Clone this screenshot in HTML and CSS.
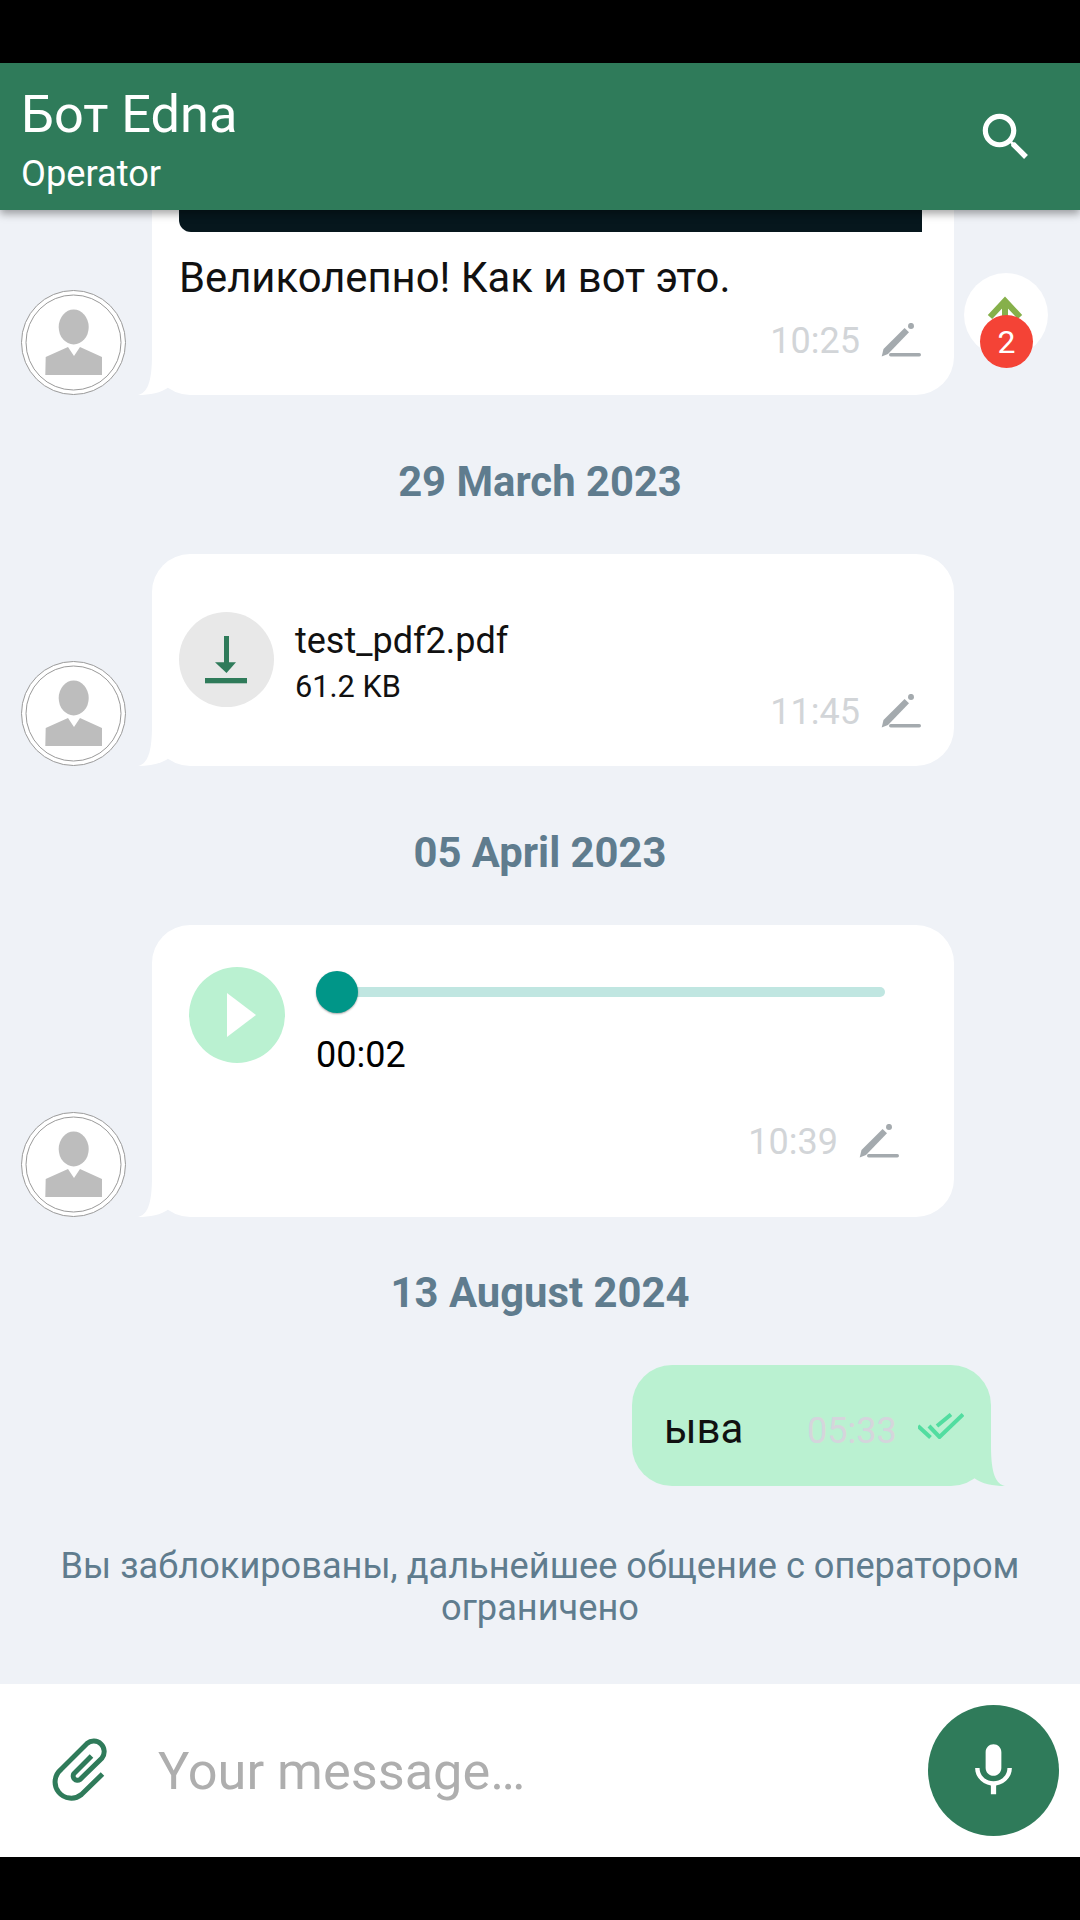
FILE: index.html
```html
<!DOCTYPE html>
<html lang="ru">
<head>
<meta charset="utf-8">
<title>Бот Edna</title>
<link rel="stylesheet" href="styles.css">
</head>
<body>
<svg class="defs" width="0" height="0" aria-hidden="true">
  <defs>
    <symbol id="avatar" viewBox="0 0 105 105">
      <circle cx="52.5" cy="52.5" r="52" fill="#fff" stroke="#9a9a9a" stroke-width="1"/>
      <circle cx="52.5" cy="52.5" r="47.5" fill="#fff" stroke="#9a9a9a" stroke-width="1"/>
      <ellipse cx="52.7" cy="37" rx="15" ry="17.5" fill="#bdbdbd"/>
      <path d="M24.7 67 47 57l6 9 6-9 22 10v18H24.3z" fill="#bdbdbd"/>
    </symbol>
    <symbol id="pen" viewBox="0 0 42 36">
      <path d="M1.700 33.500 3.500 26 24.600 5 29 9.300 8 31Z" fill="#a4aaae"/>
      <circle cx="31" cy="2.900" r="3" fill="#a4aaae"/>
      <rect x="9" y="30" width="32" height="3.500" rx="1.700" fill="#a4aaae"/>
    </symbol>
    <symbol id="tail" viewBox="0 0 60 40">
      <path d="M0 40C9 38 14 28 14 0H40V30L31 32C23 38 12 40 0 40Z"/>
    </symbol>
  </defs>
</svg>
<div class="app">
  <header class="topbar">
    <div class="titles">
      <div class="title">Бот Edna</div>
      <div class="subtitle">Operator</div>
    </div>
    <svg class="search" viewBox="0 0 24 24"><path fill="#fff" d="M15.500 14h-.79l-.28-.27C15.410 12.590 16 11.110 16 9.500 16 5.910 13.090 3 9.500 3S3 5.910 3 9.500 5.910 16 9.500 16c1.610 0 3.090-.59 4.230-1.570l.27.28v.79l5 4.990L20.490 19l-4.990-5zm-6 0C7.010 14 5 11.990 5 9.500S7.010 5 9.500 5 14 7.010 14 9.500 11.990 14 9.500 14z"/></svg>
  </header>

  <main class="chat">
    <div class="scroll-btn">
      <svg class="scroll-arrow" viewBox="0 0 40 34"><path d="M5 23 20 7l15 16M20 8v24" fill="none" stroke="#86b04a" stroke-width="6"/></svg>
      <span class="badge">2</span>
    </div>

    <div class="row">
      <svg class="avatar"><use href="#avatar"/></svg>
      <div class="bubble bubble-image">
        <svg class="tail"><use href="#tail"/></svg>
        <div class="photo"></div>
        <div class="msg-text">Великолепно! Как и вот это.</div>
        <div class="meta meta-image"><span class="time">10:25</span><svg class="pen"><use href="#pen"/></svg></div>
      </div>
    </div>

    <div class="date">29 March 2023</div>

    <div class="row">
      <svg class="avatar"><use href="#avatar"/></svg>
      <div class="bubble bubble-file">
        <svg class="tail"><use href="#tail"/></svg>
        <div class="file">
          <div class="file-icon">
            <svg viewBox="0 0 95 95" width="95" height="95"><rect x="45" y="24" width="5" height="29" fill="#2f7b5a"/><path d="M36 50.300H57L47.500 61Z" fill="#2f7b5a"/><rect x="26" y="66" width="42" height="5.300" fill="#2f7b5a"/></svg>
          </div>
          <div class="file-info">
            <div class="file-name">test_pdf2.pdf</div>
            <div class="file-size">61.2 KB</div>
          </div>
        </div>
        <div class="meta meta-file"><span class="time">11:45</span><svg class="pen"><use href="#pen"/></svg></div>
      </div>
    </div>

    <div class="date">05 April 2023</div>

    <div class="row">
      <svg class="avatar"><use href="#avatar"/></svg>
      <div class="bubble bubble-audio">
        <svg class="tail"><use href="#tail"/></svg>
        <div class="audio">
          <div class="play"><svg viewBox="0 0 96 96" width="96" height="96"><path d="M38 26 67 48 38 70Z" fill="#fff"/></svg></div>
          <div class="player">
            <div class="slider"><span class="thumb"></span></div>
            <div class="duration">00:02</div>
          </div>
        </div>
        <div class="meta meta-audio"><span class="time">10:39</span><svg class="pen"><use href="#pen"/></svg></div>
      </div>
    </div>

    <div class="date date-last">13 August 2024</div>

    <div class="row row-out">
      <div class="bubble-out">
        <svg class="tail-out"><use href="#tail"/></svg>
        <span class="out-text">ыва</span>
        <span class="out-time">05:33</span>
        <svg class="ticks" viewBox="0 0 46 26"><path d="M0 13 12.500 24.500M11 13 21.500 24 45 1.500M19 13 33 1.500" fill="none" stroke="#52dda0" stroke-width="4"/></svg>
      </div>
    </div>

    <div class="notice">Вы заблокированы, дальнейшее общение с оператором ограничено</div>
  </main>

  <footer class="composer">
    <svg class="clip" viewBox="0 0 90 90"><path d="M49.500 30 32 47.500A4.300 4.300 0 0 0 38 53.500L60 32A10.500 10.500 0 0 0 45 17.500L19 43.500A14.500 14.500 0 0 0 39.500 68.500L60.500 48" fill="none" stroke="#2f7b5a" stroke-width="5"/></svg>
    <div class="placeholder">Your message…</div>
    <div class="mic">
      <svg viewBox="0 0 24 24" width="63" height="63"><path fill="#fff" d="M12 14c1.660 0 2.990-1.340 2.990-3L15 5c0-1.660-1.340-3-3-3S9 3.340 9 5v6c0 1.660 1.340 3 3 3zm5.300-3c0 3-2.540 5.100-5.300 5.100S6.700 14 6.700 11H5c0 3.410 2.720 6.230 6 6.720V21h2v-3.280c3.280-.48 6-3.300 6-6.720h-1.700z"/></svg>
    </div>
  </footer>
</div>
</body>
</html>
```
FILE: styles.css
```css
* { box-sizing: border-box; }
html, body { margin: 0; height: 100%; }
body { background: #000; font-family: Roboto, "Noto Sans", sans-serif; }
.defs { position: absolute; }
.app {
  height: 1920px;
  padding: 63px 0;
  display: flex;
  flex-direction: column;
}
.topbar {
  height: 147px;
  flex: none;
  background: #2f7b5a;
  color: #fff;
  display: flex;
  align-items: center;
  justify-content: space-between;
  padding: 0 43px 0 21px;
  box-shadow: 0 4px 8px rgba(0, 0, 0, .35);
  position: relative;
  z-index: 2;
}
.titles { padding-top: 6px; }
.title { font-size: 52.3px; line-height: 60px; }
.subtitle { font-size: 36.2px; line-height: 42px; margin-top: 9px; }
.search { width: 62px; height: 62px; display: block; }

.chat {
  flex: 1;
  min-height: 0;
  overflow: hidden;
  background: #eff2f7;
  display: flex;
  flex-direction: column;
  justify-content: flex-end;
  position: relative;
  padding-bottom: 54px;
}
.row {
  display: flex;
  flex: none;
  align-items: flex-end;
  gap: 26px;
  padding-left: 21px;
}
.row-out { justify-content: flex-end; padding: 0 89px 0 0; margin-top: 50px; }
.avatar { width: 105px; height: 105px; flex: none; display: block; }
.bubble {
  width: 802px;
  background: #fff;
  border-radius: 38px;
  position: relative;
  color: #111;
}
.tail {
  position: absolute;
  left: -14px;
  bottom: 0;
  width: 60px;
  height: 40px;
  fill: #fff;
}
.bubble-image { padding: 0 32px 34px 27px; }
.photo {
  height: 300px;
  background: #06171d;
  border-radius: 0 0 0 12px;
}
.msg-text { font-size: 41.8px; line-height: 46px; margin-top: 22.5px; position: relative; }
.meta { display: flex; align-items: center; justify-content: flex-end; gap: 20px; height: 40px; position: relative; }
.meta-image { margin-top: 20.5px; }
.meta-file { margin-top: -15px; }
.time { font-size: 36px; line-height: 40px; color: #d2d5d8; }
.pen { width: 42px; height: 36px; display: block; }

.date {
  flex: none;
  text-align: center;
  font-size: 41.8px;
  font-weight: 700;
  line-height: 46px;
  color: #5f7c8e;
  margin: 64px 0 49px;
}
.date-last { margin: 53px 0 -1px; }

.bubble-file { padding: 58px 32px 34px 27px; height: 212px; }
.file { display: flex; gap: 21px; position: relative; z-index: 1; }
.file-icon { width: 95px; height: 95px; border-radius: 50%; background: #e8e8e8; flex: none; }
.file-name { font-size: 36px; line-height: 42px; margin-top: 8px; }
.file-size { font-size: 30.7px; line-height: 36px; margin-top: 7px; }

.bubble-audio { padding: 42px 54px 55px 37px; height: 292px; }
.audio { display: flex; gap: 31px; height: 155px; }
.play { width: 96px; height: 96px; border-radius: 50%; background: #baf1d1; flex: none; }
.player { width: 569px; padding-top: 4px; }
.slider {
  height: 10px;
  margin-top: 16px;
  background: #c0e6e1;
  border-radius: 5px;
  position: relative;
}
.thumb {
  position: absolute;
  left: 0;
  top: -16px;
  width: 42px;
  height: 42px;
  border-radius: 50%;
  background: #009688;
  box-shadow: 0 1px 2px rgba(0, 0, 0, .35);
}
.duration { font-size: 36px; line-height: 42px; color: #000; margin-top: 37px; }

.bubble-out {
  width: 359px;
  height: 121px;
  background: #baf1d1;
  border-radius: 40px;
  position: relative;
  display: flex;
  align-items: center;
  padding-left: 32px;
}
.tail-out {
  position: absolute;
  right: -14px;
  bottom: 0;
  width: 60px;
  height: 40px;
  fill: #baf1d1;
  transform: scaleX(-1);
}
.out-text { font-size: 42px; color: #111; width: 143px; position: relative; top: 3px; }
.out-time { font-size: 36px; color: #d5d5dc; width: 111px; position: relative; top: 5px; }
.ticks { width: 46px; height: 26px; position: relative; display: block; }

.notice {
  flex: none;
  text-align: center;
  font-size: 36.2px;
  line-height: 42px;
  color: #5f7c8e;
  margin-top: 59px;
  margin-bottom: 1px;
  padding: 0 40px;
}

.scroll-btn {
  position: absolute;
  top: 63px;
  right: 32px;
  width: 84px;
  height: 84px;
  border-radius: 50%;
  background: rgba(255, 255, 255, .95);
}
.scroll-arrow { position: absolute; left: 21px; top: 21px; width: 40px; height: 34px; }
.badge {
  position: absolute;
  left: 16px;
  top: 42px;
  width: 53px;
  height: 53px;
  border-radius: 50%;
  background: #f44336;
  color: #fff;
  font-size: 32px;
  display: flex;
  align-items: center;
  justify-content: center;
}

.composer {
  height: 173px;
  flex: none;
  background: #fff;
  display: flex;
  align-items: center;
  padding: 0 21px 0 42px;
  position: relative;
}
.clip { width: 90px; height: 90px; flex: none; }
.placeholder { flex: 1; font-size: 52.3px; color: #aeaeae; margin-left: 26px; }
.mic {
  width: 131px;
  height: 131px;
  border-radius: 50%;
  background: #2f7b5a;
  display: flex;
  align-items: center;
  justify-content: center;
  flex: none;
}
```
